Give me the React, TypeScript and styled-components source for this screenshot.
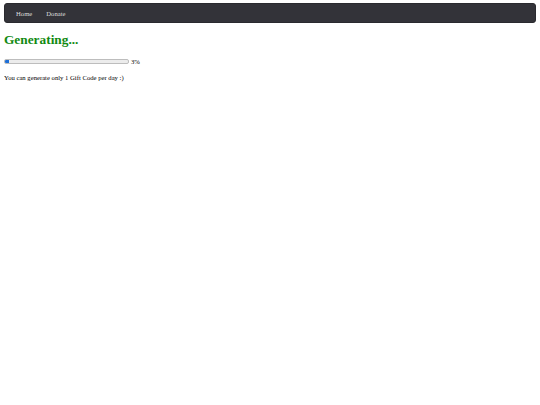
import React from 'react';
import styled, { createGlobalStyle } from 'styled-components';

const GlobalStyle = createGlobalStyle`
  body {
    margin: 3px 4px;
    background: #ffffff;
    font-family: "Liberation Serif", "Times New Roman", serif;
    font-size: 6.67px;
    color: #000000;
  }
`;

const Nav = styled.nav`
  background-color: #333339;
  border: 1px solid #2a2a2f;
  border-radius: 3px;
  height: 18px;
  padding: 0 7px;
  display: flex;
  align-items: center;
  gap: 6px;
`;

const NavLink = styled.a`
  color: #dcdcdc;
  text-decoration: none;
  font-size: 6.67px;
  padding: 0 4px;
`;

const Title = styled.h1`
  color: #128a12;
  font-size: 13.33px;
  font-weight: bold;
  margin: 9px 0 10px;
`;

const ProgressRow = styled.div`
  display: flex;
  align-items: center;
  gap: 2px;
`;

const Track = styled.div`
  width: 123px;
  height: 3px;
  background: #ececec;
  border: 1px solid #bdbdbd;
  border-radius: 2px;
  overflow: hidden;
`;

const Fill = styled.div`
  height: 100%;
  background: #1d6fd8;
`;

const Percent = styled.span`
  font-size: 6.67px;
`;

const Note = styled.p`
  margin: 9px 0;
`;

const App: React.FC = () => {
  const progress = 3;
  return (
    <>
      <GlobalStyle />
      <Nav>
        <NavLink href="#">Home</NavLink>
        <NavLink href="#">Donate</NavLink>
      </Nav>
      <Title>Generating...</Title>
      <ProgressRow>
        <Track>
          <Fill style={{ width: `${progress}%` }} />
        </Track>
        <Percent>{progress}%</Percent>
      </ProgressRow>
      <Note>You can generate only 1 Gift Code per day :)</Note>
    </>
  );
};

export default App;
